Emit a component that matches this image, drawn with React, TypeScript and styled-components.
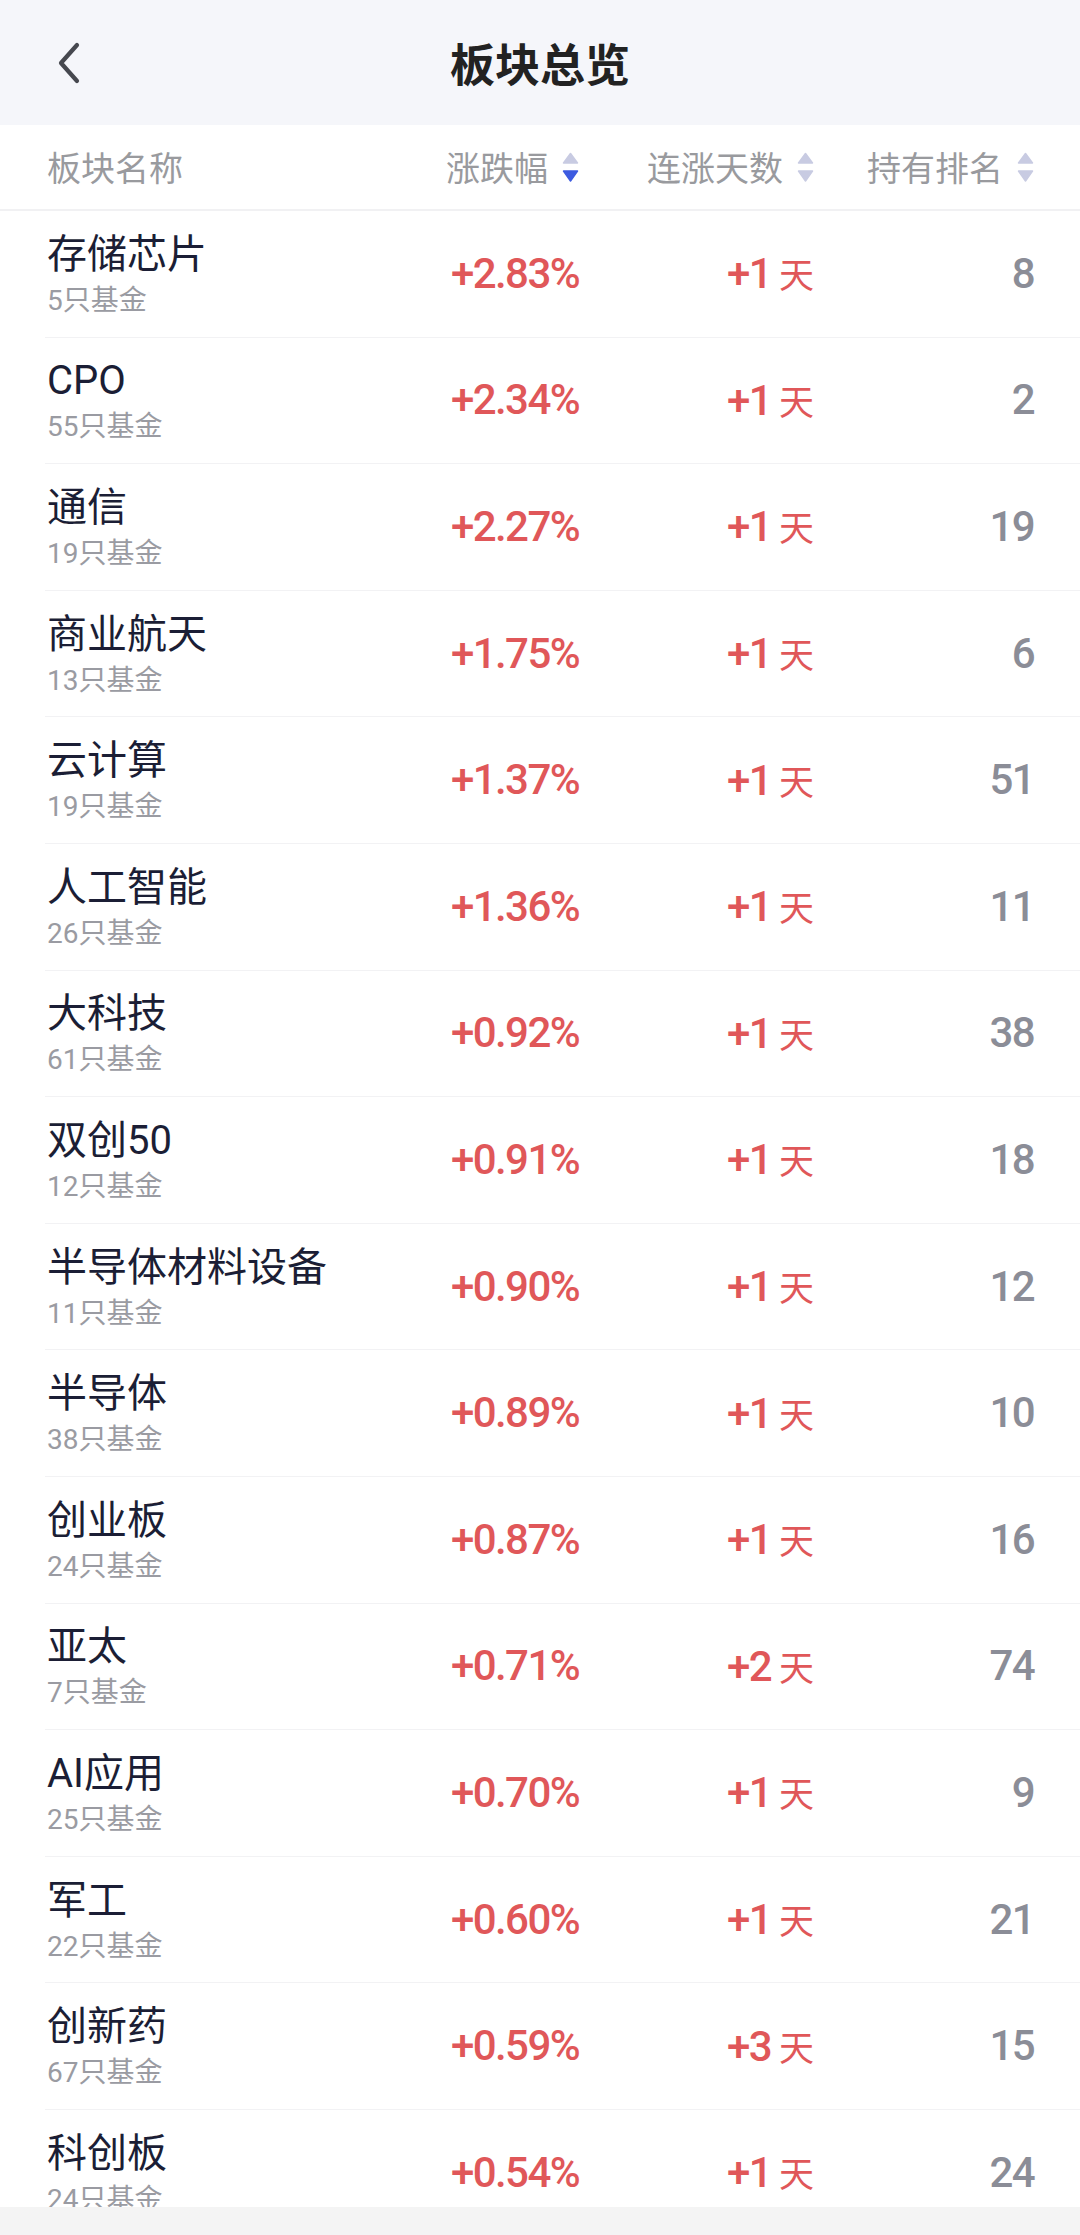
import React from "react";
import styled, { createGlobalStyle } from "styled-components";

type Sector = {
  name: string;
  funds: number;
  change: string;
  days: number;
  rank: number;
};

const sectors: Sector[] = [
  { name: "存储芯片", funds: 5, change: "+2.83%", days: 1, rank: 8 },
  { name: "CPO", funds: 55, change: "+2.34%", days: 1, rank: 2 },
  { name: "通信", funds: 19, change: "+2.27%", days: 1, rank: 19 },
  { name: "商业航天", funds: 13, change: "+1.75%", days: 1, rank: 6 },
  { name: "云计算", funds: 19, change: "+1.37%", days: 1, rank: 51 },
  { name: "人工智能", funds: 26, change: "+1.36%", days: 1, rank: 11 },
  { name: "大科技", funds: 61, change: "+0.92%", days: 1, rank: 38 },
  { name: "双创50", funds: 12, change: "+0.91%", days: 1, rank: 18 },
  { name: "半导体材料设备", funds: 11, change: "+0.90%", days: 1, rank: 12 },
  { name: "半导体", funds: 38, change: "+0.89%", days: 1, rank: 10 },
  { name: "创业板", funds: 24, change: "+0.87%", days: 1, rank: 16 },
  { name: "亚太", funds: 7, change: "+0.71%", days: 2, rank: 74 },
  { name: "AI应用", funds: 25, change: "+0.70%", days: 1, rank: 9 },
  { name: "军工", funds: 22, change: "+0.60%", days: 1, rank: 21 },
  { name: "创新药", funds: 67, change: "+0.59%", days: 3, rank: 15 },
  { name: "科创板", funds: 24, change: "+0.54%", days: 1, rank: 24 },
];

const GlobalStyle = createGlobalStyle`
  html, body {
    margin: 0;
    padding: 0;
    background: #ffffff;
  }
  body {
    font-family: Roboto, "Noto Sans CJK SC", sans-serif;
  }
`;

const Page = styled.div`
  width: 1080px;
  height: 2235px;
  display: flex;
  flex-direction: column;
  background: #ffffff;
  overflow: hidden;
`;

const NavBar = styled.header`
  height: 125px;
  flex-shrink: 0;
  background: #f5f6fa;
  display: grid;
  grid-template-columns: 140px 1fr 140px;
  align-items: center;
`;

const BackButton = styled.button`
  justify-self: start;
  margin-left: 52px;
  width: 34px;
  height: 50px;
  padding: 0;
  border: none;
  background: transparent;
  display: flex;
  align-items: center;
  justify-content: center;
`;

const Title = styled.h1`
  margin: 0;
  text-align: center;
  font-family: "Noto Sans CJK SC", sans-serif;
  font-size: 45px;
  font-weight: 600;
  line-height: 50px;
  color: #222222;
`;

const grid = `
  display: grid;
  grid-template-columns: 1fr 232px 235px 220px;
  align-items: center;
`;

const TableHead = styled.div`
  ${grid}
  height: 84px;
  flex-shrink: 0;
  padding: 0 46px 0 47px;
  border-bottom: 2px solid #f1f1f3;
`;

const HeadCell = styled.div<{ $align?: "left" | "right" }>`
  display: flex;
  align-items: center;
  justify-content: ${(p) => (p.$align === "left" ? "flex-start" : "flex-end")};
  gap: 14px;
  font-family: "Noto Sans CJK SC", sans-serif;
  font-size: 34px;
  line-height: 40px;
  color: #999a9e;
`;

const List = styled.div`
  flex: 1;
  overflow: hidden;
`;

const Row = styled.div`
  ${grid}
  height: 126.6px;
  box-sizing: border-box;
  margin-left: 45px;
  padding: 0 46px 0 2px;
  border-bottom: 1px solid #f2f2f4;
`;

const NameCell = styled.div`
  display: flex;
  flex-direction: column;
  gap: 6px;
  padding-top: 2px;
`;

const Name = styled.div`
  font-family: Roboto, "Noto Sans CJK SC", sans-serif;
  font-size: 40px;
  line-height: 46px;
  color: #1b1e35;
  white-space: nowrap;
`;

const Funds = styled.div`
  font-family: Roboto, "Noto Sans CJK SC", sans-serif;
  font-size: 28px;
  line-height: 34px;
  color: #9a9ba2;
`;

const Value = styled.div<{ $tone: "up" | "muted" }>`
  text-align: right;
  font-family: Roboto, "Noto Sans CJK SC", sans-serif;
  font-size: 42px;
  font-weight: 500;
  letter-spacing: -1.6px;
  line-height: 50px;
  color: ${(p) => (p.$tone === "up" ? "#e05759" : "#8b8d97")};
`;

const Unit = styled.span`
  margin-left: 8px;
  font-family: "Noto Sans CJK SC", sans-serif;
  font-size: 35px;
  font-weight: 400;
  letter-spacing: 0;
`;

const BottomBar = styled.div`
  height: 28px;
  flex-shrink: 0;
  background: #f4f4f4;
`;

const ChevronLeft = () => (
  <svg width="26" height="42" viewBox="0 0 26 42" fill="none">
    <path
      d="M21 3 L5 21 L21 39"
      stroke="#46484f"
      strokeWidth="4.2"
      strokeLinecap="round"
      strokeLinejoin="round"
    />
  </svg>
);

const SortIcon = ({ active }: { active?: "asc" | "desc" }) => (
  <svg width="17" height="31" viewBox="0 0 17 31">
    <path
      d="M1.5 11 L8.5 1.5 L15.5 11 Z"
      fill={active === "asc" ? "#3d5be0" : "#c8cbe2"}
      stroke={active === "asc" ? "#3d5be0" : "#c8cbe2"}
      strokeWidth="1.5"
      strokeLinejoin="round"
    />
    <path
      d="M1.5 19 L15.5 19 L8.5 29 Z"
      fill={active === "desc" ? "#3d5be0" : "#c8cbe2"}
      stroke={active === "desc" ? "#3d5be0" : "#c8cbe2"}
      strokeWidth="1.5"
      strokeLinejoin="round"
    />
  </svg>
);

const SectorRow: React.FC<{ item: Sector }> = ({ item }) => (
  <Row>
    <NameCell>
      <Name>{item.name}</Name>
      <Funds>{item.funds}只基金</Funds>
    </NameCell>
    <Value $tone="up">{item.change}</Value>
    <Value $tone="up">
      +{item.days}
      <Unit>天</Unit>
    </Value>
    <Value $tone="muted">{item.rank}</Value>
  </Row>
);

const App: React.FC = () => {
  return (
    <Page>
      <GlobalStyle />
      <NavBar>
        <BackButton aria-label="返回">
          <ChevronLeft />
        </BackButton>
        <Title>板块总览</Title>
        <div />
      </NavBar>
      <TableHead>
        <HeadCell $align="left">板块名称</HeadCell>
        <HeadCell>
          涨跌幅
          <SortIcon active="desc" />
        </HeadCell>
        <HeadCell>
          连涨天数
          <SortIcon />
        </HeadCell>
        <HeadCell>
          持有排名
          <SortIcon />
        </HeadCell>
      </TableHead>
      <List>
        {sectors.map((item) => (
          <SectorRow key={item.name} item={item} />
        ))}
      </List>
      <BottomBar />
    </Page>
  );
};

export default App;
